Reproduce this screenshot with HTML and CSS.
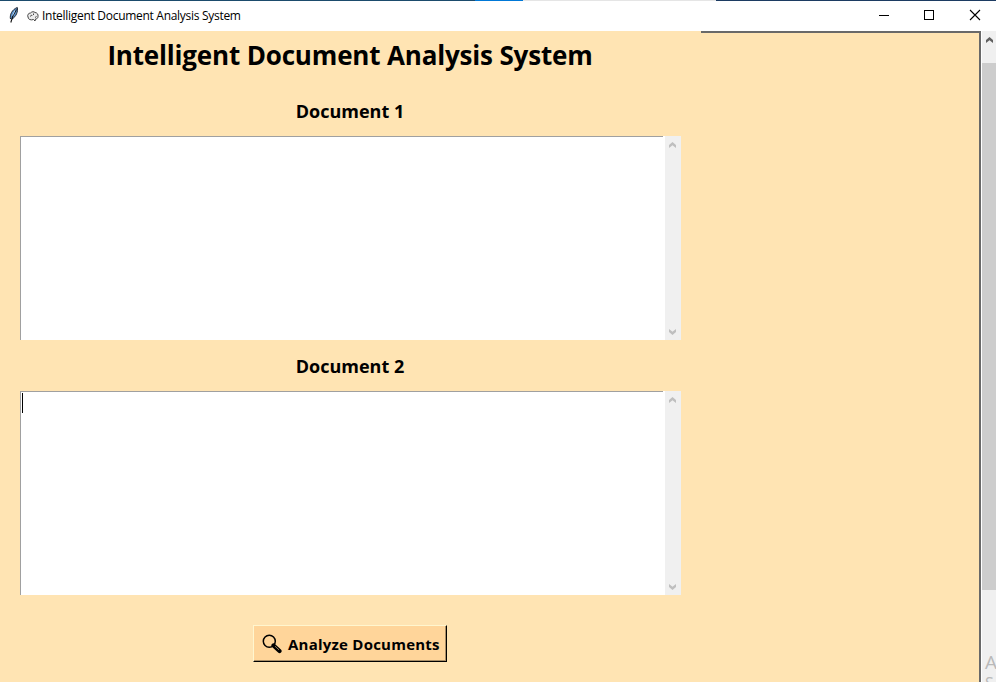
FILE: index.html
```html
<!DOCTYPE html>
<html lang="en">
<head>
<meta charset="utf-8">
<title>Intelligent Document Analysis System</title>
<link rel="stylesheet" href="styles.css">
</head>
<body>
<div class="desktop-edge"><i class="edge-teal"></i><i class="edge-blue"></i><i class="edge-gray"></i><i class="edge-navy"></i></div>
<header class="titlebar">
  <svg class="feather" width="12" height="18" viewBox="0 0 12 18"><path d="M2.500 13C1.500 9 4 3.500 9.300 1.500c.8 4-1 9-5.300 11.500" fill="#5c93cf" stroke="#20262f" stroke-width="1"/><path d="M8.500 3.500L5 9.500 2.800 16.500" fill="none" stroke="#111" stroke-width="1.100"/><path d="M7 4.500l-2.500 5" stroke="#b9d8f3" stroke-width=".9"/></svg>
  <svg class="brain" width="12" height="11" viewBox="0 0 12 11"><path d="M1 6C0 4 1.500 2 3.500 2 5 .3 7 .5 8 1.500c2 0 3.500 2 3 4 0 2-1.500 2.500-2.500 2.500L8 10 6.500 8.500C4 9.500 1 8.500 1 6z" fill="#ececec" stroke="#444" stroke-width="1"/><path d="M3.500 5.500c0-1.500 1.500-1.500 2-.5M6.500 2.500V4M8 6.500l1.500-1" fill="none" stroke="#333" stroke-width=".9"/></svg>
  <span class="caption">Intelligent Document Analysis System</span>
  <svg class="window-controls" width="138" height="30" viewBox="0 0 138 30" shape-rendering="crispEdges"><path d="M21 14.500h10" stroke="#000"/><rect x="66.500" y="9.500" width="9" height="9" fill="none" stroke="#000"/><path d="M112 9l10 10M122 9l-10 10" stroke="#000" stroke-width="1.100" shape-rendering="auto"/></svg>
</header>
<div class="workspace">
  <main class="form">
    <h1>Intelligent Document Analysis System</h1>
    <h2>Document 1</h2>
    <div class="editor">
      <div class="text-area"></div>
      <div class="editor-scroll">
        <svg width="7" height="6" viewBox="0 0 7 6"><path d="M0 3L3.500 0 7 3v3L3.500 3.200 0 6z"/></svg>
        <svg width="7" height="6" viewBox="0 0 7 6"><path d="M0 0l3.500 2.800L7 0v3L3.500 6 0 3z"/></svg>
      </div>
    </div>
    <h2>Document 2</h2>
    <div class="editor">
      <div class="text-area"><i class="caret"></i></div>
      <div class="editor-scroll">
        <svg width="7" height="6" viewBox="0 0 7 6"><path d="M0 3L3.500 0 7 3v3L3.500 3.200 0 6z"/></svg>
        <svg width="7" height="6" viewBox="0 0 7 6"><path d="M0 0l3.500 2.800L7 0v3L3.500 6 0 3z"/></svg>
      </div>
    </div>
    <button class="analyze">
      <svg width="20" height="20" viewBox="0 0 20 20"><circle cx="7.300" cy="7.200" r="6" fill="none" stroke="#000" stroke-width="1.500"/><path d="M11.500 11.500l6 5.500" stroke="#000" stroke-width="4.200" stroke-linecap="round"/><path d="M13 12.200l4 3.700" stroke="#b69a70" stroke-width=".8"/></svg>
      <span>Analyze Documents</span>
    </button>
  </main>
  <aside class="canvas-rest"></aside>
  <div class="page-scroll">
    <svg width="7" height="6" viewBox="0 0 7 6"><path d="M0 3L3.500 0 7 3v3L3.500 3.200 0 6z"/></svg>
    <div class="thumb"></div>
    <div class="watermark"><span>A</span><span class="second-line">S</span></div>
  </div>
</div>
</body>
</html>
```

FILE: styles.css
```css
* { box-sizing: border-box; }
body {
  margin: 0;
  width: 996px;
  height: 682px;
  overflow: hidden;
  display: flex;
  flex-direction: column;
  background: #fff;
  color: #000;
  font-family: "Open Sans", "Noto Sans", sans-serif;
}
.desktop-edge { display: flex; height: 1px; flex: none; }
.edge-teal { width: 475px; background: #1b4b6c; }
.edge-blue { width: 48px; background: #0078d7; }
.edge-gray { width: 193px; background: #e5e5e5; }
.edge-navy { flex: 1; background: #1c3b62; }
.titlebar { display: flex; align-items: center; height: 30px; flex: none; padding-left: 8px; }
.feather { margin-right: 7px; margin-top: -2px; }
.brain { margin-right: 3px; }
.caption { font-size: 12px; line-height: 16px; letter-spacing: -0.29px; white-space: nowrap; }
.window-controls { margin-left: auto; }
.workspace { display: flex; flex: 1; min-height: 0; background: #ffe4b3; }
.form { width: 701px; padding: 0 20px; display: flex; flex-direction: column; align-items: center; }
h1, h2 { margin: 0 1px 0 0; font-weight: 700; white-space: nowrap; }
h1 { height: 55px; font-size: 26px; line-height: 49px; letter-spacing: -0.17px; }
h2 { height: 50px; font-size: 18px; line-height: 50px; letter-spacing: 0; }
.editor { display: flex; width: 661px; height: 204px; flex: none; margin-bottom: 1px; }
.text-area {
  width: 643px;
  margin-right: 2px;
  background: #fff;
  border: solid #a0a0a0;
  border-width: 1px 0 0 1px;
  box-shadow: 2px 0 #fff;
  padding: 1px;
}
.caret { display: block; width: 1px; height: 20px; background: #000; }
.editor-scroll {
  width: 16px;
  background: #f0f0f0;
  display: flex;
  flex-direction: column;
  align-items: center;
  justify-content: space-between;
  padding: 6px 1px 5px 0;
  fill: #bfbfbf;
}
.analyze {
  width: 194px;
  height: 37px;
  flex: none;
  margin: 29px 1px 0 0;
  padding: 1px 0 0 8px;
  display: flex;
  align-items: center;
  gap: 6px;
  background: #ffd59a;
  border: 1px solid;
  border-color: #fff6cf #000 #000 #fff6cf;
  box-shadow: inset -1px -1px #a98e67;
  font: 700 15px/20px "Open Sans", "Noto Sans", sans-serif;
  letter-spacing: 0.23px;
  color: #000;
  white-space: nowrap;
}
.canvas-rest { width: 280px; border: solid #696969; border-width: 2px 2px 0 0; }
.page-scroll {
  width: 15px;
  border-left: 1px solid #fff;
  background: #f0f0f0;
  display: flex;
  flex-direction: column;
  overflow: hidden;
}
.page-scroll svg { margin: 6px 0 20px 4px; fill: #606060; flex: none; }
.thumb { height: 527px; flex: none; background: #cdcdcd; }
.watermark { margin: 61px 0 0 3px; font-size: 19px; line-height: 22px; color: #b9b9b9; }
.watermark span { display: block; }
.watermark .second-line { font-size: 16px; line-height: 20px; }
```
